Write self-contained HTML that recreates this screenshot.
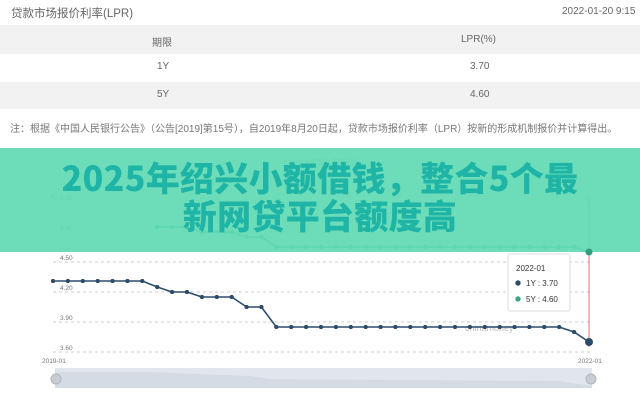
<!DOCTYPE html>
<html><head><meta charset="utf-8"><style>
*{margin:0;padding:0;box-sizing:border-box}
body{width:640px;height:400px;overflow:hidden;background:#fff;font-family:"Liberation Sans","Noto Sans CJK SC",sans-serif;color:#555;position:relative}
.abs{position:absolute}
.t{font-size:11px;color:#666}
.band{position:absolute;left:0;top:148px;width:640px;height:104px;background:rgba(98,218,180,0.93)}
.title{position:absolute;left:0;top:158px;width:640px;text-align:center;font-family:"Noto Sans CJK SC",sans-serif;font-weight:900;font-size:34px;line-height:38px;color:#1fb5a6;letter-spacing:0.3px}
</style></head><body>
<div class="abs t" style="left:11px;top:5px;font-size:11.5px">贷款市场报价利率(LPR)</div>
<div class="abs t" style="left:562px;top:6px;font-size:10px">2022-01-20 9:15</div>
<div class="abs" style="left:0;top:25px;width:640px;height:29px;background:#f2f2f2"></div>
<div class="abs" style="left:0;top:82px;width:640px;height:27px;background:#f2f2f2"></div>
<div class="abs t" style="left:152px;top:34px;font-size:10px">期限</div>
<div class="abs t" style="left:461px;top:34px;font-size:10px">LPR(%)</div>
<div class="abs t" style="left:157px;top:61px;font-size:10px">1Y</div>
<div class="abs t" style="left:470px;top:61px;font-size:10px">3.70</div>
<div class="abs t" style="left:157px;top:89px;font-size:10px">5Y</div>
<div class="abs t" style="left:470px;top:89px;font-size:10px">4.60</div>
<div class="abs t" style="left:10px;top:120px;font-size:10px;white-space:nowrap;color:#777">注：根据《中国人民银行公告》（公告[2019]第15号），自2019年8月20日起，贷款市场报价利率（LPR）按新的形成机制报价并计算得出。</div>

<svg class="abs" style="left:0;top:0" width="640" height="400">
<defs>
<marker id="m1" viewBox="0 0 6 6" refX="3" refY="3" markerWidth="4.4" markerHeight="4.4" markerUnits="userSpaceOnUse"><circle cx="3" cy="3" r="3" fill="#2b4d6a"/></marker>
<marker id="m2" viewBox="0 0 6 6" refX="3" refY="3" markerWidth="4.4" markerHeight="4.4" markerUnits="userSpaceOnUse"><circle cx="3" cy="3" r="3" fill="#2f9e7c"/></marker>
</defs>
<text x="320" y="166" font-size="9" fill="#aaa" text-anchor="middle">LPR(1年期)走势图</text>
<text x="50" y="199" font-size="6" fill="#777">%</text>
<g stroke="#ccc" stroke-dasharray="3,3" stroke-width="1">
<line x1="53" y1="202" x2="592" y2="202"/><line x1="53" y1="232" x2="592" y2="232"/>
<line x1="53" y1="262" x2="592" y2="262"/><line x1="53" y1="292" x2="592" y2="292"/>
<line x1="53" y1="322" x2="592" y2="322"/><line x1="53" y1="352" x2="592" y2="352"/>
</g>
<g font-size="6.5" fill="#777">
<text x="60" y="200">5.10</text><text x="60" y="230">4.80</text><text x="60" y="260">4.50</text>
<text x="60" y="290">4.20</text><text x="60" y="320">3.90</text><text x="60" y="350">3.60</text>
<text x="42" y="363">2019-01</text><text x="578" y="363">2022-01</text>
</g>
<text x="465" y="331" font-size="9" fill="#bbb">chinamoney</text>
<line x1="589" y1="196" x2="589" y2="347" stroke="#e07070" stroke-width="1"/>
<polyline fill="none" stroke="#2b4d6a" stroke-width="1.6" marker-start="url(#m1)" marker-mid="url(#m1)"
points="53,281 67.9,281 82.8,281 97.7,281 112.6,281 127.4,281 142.3,281 157.2,287 172.1,292 187,292 201.9,297 216.8,297 231.7,297 246.6,307 261.4,307 276.3,327 291.2,327 306.1,327 321,327 335.9,327 350.8,327 365.7,327 380.6,327 395.4,327 410.3,327 425.2,327 440.1,327 455,327 469.9,327 484.8,327 499.7,327 514.6,327 529.4,327 544.3,327 559.2,327 574.1,332 589,342"/>
<circle cx="589" cy="342" r="4" fill="#2b4d6a"/>
<polyline fill="none" stroke="#2f9e7c" stroke-width="1.6" marker-start="url(#m2)" marker-mid="url(#m2)"
points="157.2,227 172.1,227 187,227 201.9,232 216.8,232 231.7,232 246.6,237 261.4,237 276.3,247 291.2,247 306.1,247 321,247 335.9,247 350.8,247 365.7,247 380.6,247 395.4,247 410.3,247 425.2,247 440.1,247 455,247 469.9,247 484.8,247 499.7,247 514.6,247 529.4,247 544.3,247 559.2,247 574.1,247 589,252"/>
<rect x="55" y="368" width="537" height="20" fill="#e1e6ee"/>
<path d="M55,372 L150,372 L250,376 L270,379 L560,381 L592,386 L592,388 L55,388Z" fill="#d5dbe5"/>
<circle cx="56" cy="379" r="5" fill="#c8ccd3" stroke="#b0b5bc"/>
<circle cx="591" cy="379" r="5" fill="#c8ccd3" stroke="#b0b5bc"/>
<rect x="508" y="254" width="62" height="57" rx="2" fill="#fff" stroke="#ddd"/>
<text x="516" y="271" font-size="8" fill="#333">2022-01</text>
<circle cx="518" cy="283" r="2.7" fill="#2b4d6a"/>
<text x="526" y="286" font-size="8" fill="#333">1Y  : 3.70</text>
<circle cx="518" cy="299" r="2.7" fill="#3aa880"/>
<text x="526" y="302" font-size="8" fill="#333">5Y  : 4.60</text>
</svg>
<div class="band"></div>
<svg class="abs" style="left:0;top:0" width="640" height="400"><circle cx="589" cy="252" r="3.5" fill="#2f9e7c"/></svg>
<div class="title">2025年绍兴小额借钱，整合5个最<br>新网贷平台额度高</div>
</body></html>
